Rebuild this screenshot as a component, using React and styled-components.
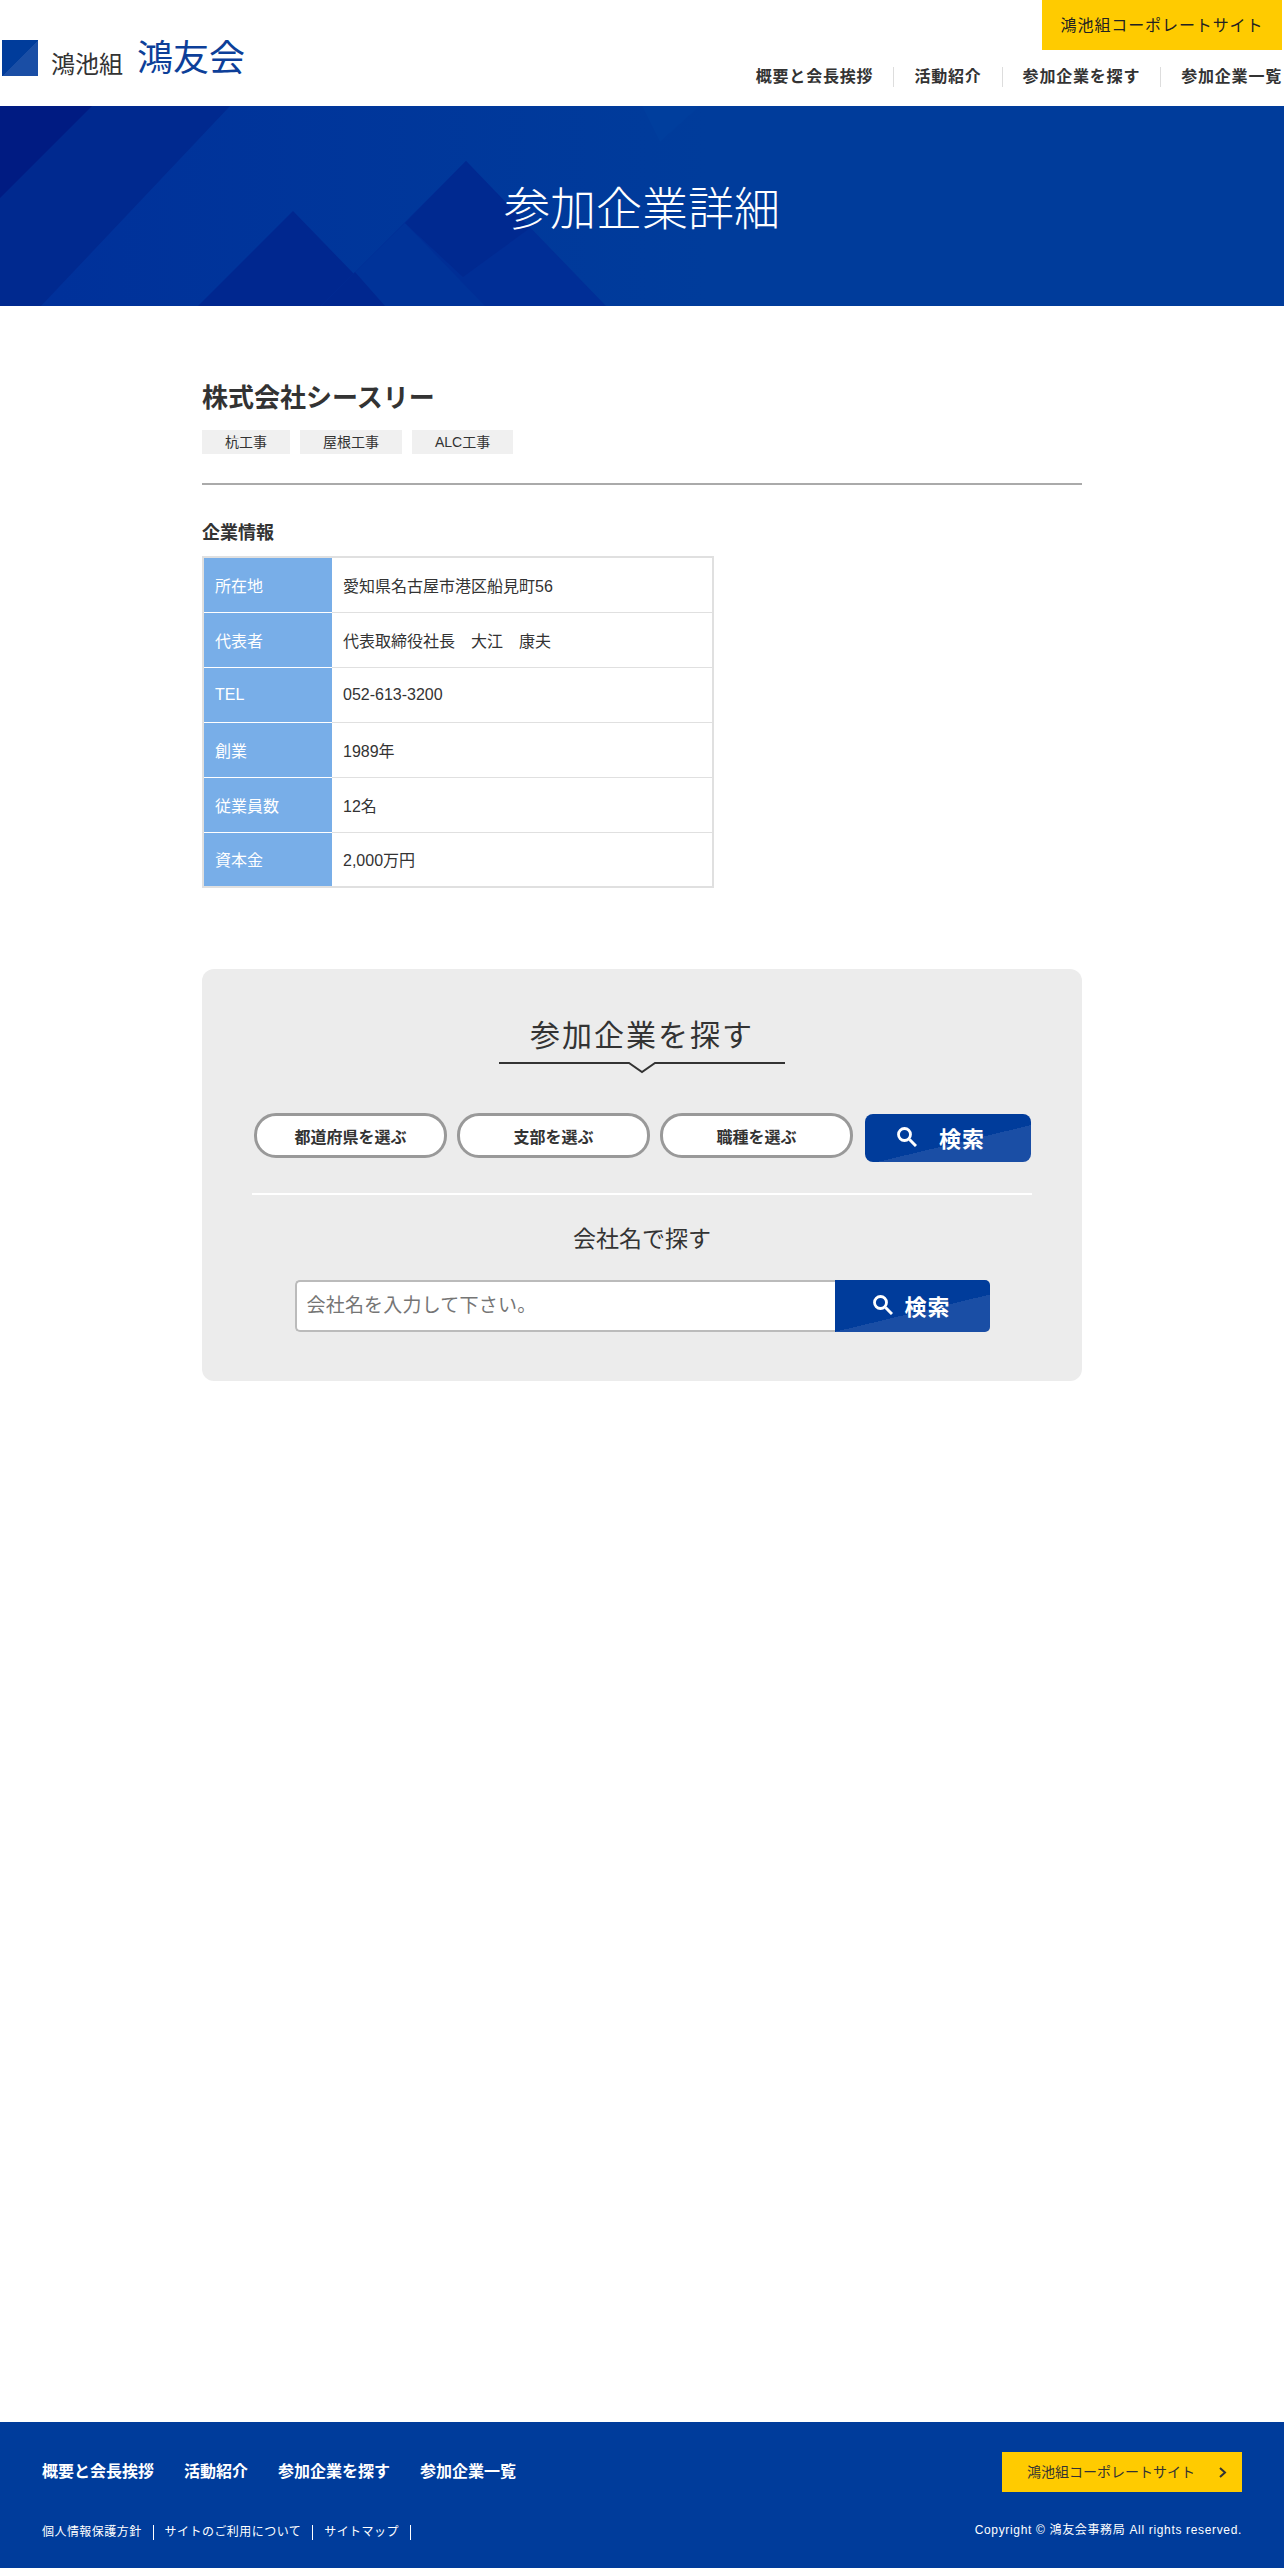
import React from "react";
import styled, { createGlobalStyle } from "styled-components";

const GlobalStyle = createGlobalStyle`
  html, body {
    margin: 0;
    padding: 0;
    background: #fff;
  }
  body {
    color: #333;
    font-family: "Liberation Sans", "Noto Sans CJK JP", sans-serif;
  }
  * {
    box-sizing: border-box;
  }
`;

const Page = styled.div`
  min-height: 2568px;
  display: flex;
  flex-direction: column;
`;

const Header = styled.header`
  height: 106px;
  display: flex;
  justify-content: space-between;
  padding: 0 2px;
`;

const Logo = styled.div`
  display: flex;
  align-items: flex-end;
  height: 78px;
`;

const LogoMark = styled.span`
  width: 36px;
  height: 36px;
  margin: 0 13px 2px 0;
  background: linear-gradient(135deg, #003c9b 50%, #1a4ea5 50%);
`;

const LogoSub = styled.span`
  font-size: 24px;
  line-height: 26px;
  color: #333;
  margin-right: 14px;
`;

const LogoMain = styled.span`
  font-size: 36px;
  line-height: 38px;
  color: #0d3f99;
`;

const HeaderRight = styled.div`
  display: flex;
  flex-direction: column;
  align-items: flex-end;
`;

const CorpLink = styled.a`
  width: 240px;
  height: 50px;
  padding-bottom: 2px;
  display: flex;
  align-items: center;
  justify-content: center;
  background: #ffcb00;
  color: #222;
  font-size: 16px;
  letter-spacing: 0.9px;
`;

const Nav = styled.nav`
  display: flex;
  align-items: center;
  margin-top: 17px;
`;

const NavItem = styled.a`
  font-size: 16px;
  font-weight: 700;
  letter-spacing: 0.8px;
  line-height: 20px;
  color: #333;
  padding: 0 0 0 20px;
  & + & {
    margin-left: 20px;
    border-left: 1px solid #ddd;
  }
`;

const Hero = styled.section`
  position: relative;
  height: 200px;
  padding-top: 6px;
  display: flex;
  align-items: center;
  justify-content: center;
  background: linear-gradient(90deg, #00309a 0%, #003c9b 55%);
  overflow: hidden;
`;

const HeroArt = styled.svg`
  position: absolute;
  inset: 0;
  width: 100%;
  height: 100%;
`;

const HeroTitle = styled.h1`
  position: relative;
  margin: 0;
  color: #fff;
  font-size: 46px;
  font-weight: 300;
  line-height: 60px;
`;

const Main = styled.main`
  width: 880px;
  margin: 0 auto;
  padding-top: 76px;
`;

const CompanyName = styled.h2`
  margin: 0;
  font-size: 26px;
  font-weight: 700;
  line-height: 32px;
`;

const Tags = styled.ul`
  display: flex;
  gap: 10px;
  margin: 16px 0 0;
  padding: 0 0 29px;
  list-style: none;
  border-bottom: 2px solid #aaa;
`;

const Tag = styled.li`
  height: 24px;
  padding: 0 23px;
  background: #f0f0f0;
  font-size: 14px;
  line-height: 24px;
`;

const SectionTitle = styled.h3`
  margin: 36px 0 0;
  font-size: 18px;
  font-weight: 700;
  line-height: 24px;
`;

const InfoTable = styled.table`
  width: 512px;
  margin-top: 11px;
  border-collapse: collapse;
  border: 2px solid #e0e0e0;
  font-size: 16px;
`;

const Th = styled.th`
  width: 129px;
  height: 55px;
  padding: 0 11px;
  background: #78aee8;
  color: #fff;
  font-weight: 400;
  text-align: left;
  border-top: 1px solid #fff;
  tr:first-child & {
    border-top: 0;
  }
`;

const Td = styled.td`
  padding: 0 11px;
  border-top: 1px solid #e0e0e0;
  tr:first-child & {
    border-top: 0;
  }
`;

const SearchPanel = styled.section`
  margin-top: 81px;
  height: 412px;
  padding: 46px 50px 0;
  background: #ececec;
  border-radius: 12px;
  display: flex;
  flex-direction: column;
  align-items: center;
`;

const SearchTitle = styled.h2`
  margin: 0;
  font-size: 30px;
  font-weight: 400;
  letter-spacing: 2px;
  line-height: 42px;
`;

const TitleRule = styled.svg`
  display: block;
  width: 286px;
  height: 12px;
  margin-top: 5px;
`;

const FilterRow = styled.div`
  align-self: stretch;
  display: flex;
  align-items: flex-start;
  gap: 10px;
  margin-top: 39px;
  padding: 0 1px 31px 2px;
  border-bottom: 2px solid #fff;
`;

const Pill = styled.button`
  width: 193px;
  height: 45px;
  padding: 0;
  background: #fff;
  border: 3px solid #999;
  border-radius: 22px;
  color: #333;
  font: 700 16px "Liberation Sans", "Noto Sans CJK JP", sans-serif;
`;

const SearchButton = styled.button`
  display: flex;
  align-items: center;
  justify-content: center;
  flex: none;
  width: ${(p) => p.$width}px;
  height: ${(p) => p.$height}px;
  gap: ${(p) => p.$gap}px;
  padding: 0 ${(p) => p.$inset || 0}px 2px 0;
  margin: ${(p) => p.$margin || "0"};
  border: 0;
  border-radius: ${(p) => p.$radius};
  background: linear-gradient(166.5deg, #003c9b 58%, #1a4ea5 58%);
  color: #fff;
  font: 700 22px "Liberation Sans", "Noto Sans CJK JP", sans-serif;
  letter-spacing: 1px;
`;

const NameTitle = styled.h3`
  margin: 28px 0 0;
  font-size: 23px;
  font-weight: 400;
  line-height: 32px;
`;

const NameForm = styled.form`
  display: flex;
  margin-top: 25px;
`;

const NameInput = styled.input`
  width: 540px;
  height: 52px;
  padding: 0 10px;
  background: #fff;
  border: 2px solid #bbb;
  border-right: 0;
  border-radius: 5px 0 0 5px;
  font: 400 19px "Liberation Sans", "Noto Sans CJK JP", sans-serif;
  letter-spacing: 0.2px;
  outline: none;
  &::placeholder {
    color: #757575;
  }
`;

const Footer = styled.footer`
  margin-top: auto;
  height: 146px;
  padding: 30px 42px 0;
  background: #003c9b;
  color: #fff;
`;

const FooterTop = styled.div`
  display: flex;
  align-items: center;
  justify-content: space-between;
`;

const FooterNav = styled.nav`
  display: flex;
  gap: 30px;
`;

const FooterNavItem = styled.a`
  font-size: 16px;
  font-weight: 700;
  line-height: 20px;
`;

const FooterCorp = styled.a`
  position: relative;
  width: 240px;
  height: 40px;
  padding-left: 25px;
  background: #ffcb00;
  color: #333;
  font-size: 14px;
  line-height: 40px;
`;

const Chevron = styled.svg`
  position: absolute;
  right: 15px;
  top: 15px;
  width: 9px;
  height: 11px;
`;

const FooterBottom = styled.div`
  display: flex;
  align-items: center;
  justify-content: space-between;
  margin-top: 33px;
`;

const SubLinks = styled.div`
  display: flex;
`;

const SubLink = styled.a`
  padding-right: 11px;
  margin-right: 11px;
  border-right: 1px solid #fff;
  font-size: 12px;
  letter-spacing: 0.45px;
  line-height: 15px;
`;

const Copyright = styled.small`
  font-size: 12px;
  letter-spacing: 0.66px;
  line-height: 15px;
  margin-top: -5px;
`;

const SearchIcon = ({ size }) => (
  <svg width={size} height={size} viewBox="0 0 20 20" fill="none" stroke="#fff">
    <circle cx="7.5" cy="7.5" r="6" strokeWidth="2.8" />
    <path d="M12.5 12.5l6.5 6.5" strokeWidth="3" />
  </svg>
);

const companyRows = [
  ["所在地", "愛知県名古屋市港区船見町56"],
  ["代表者", "代表取締役社長　大江　康夫"],
  ["TEL", "052-613-3200"],
  ["創業", "1989年"],
  ["従業員数", "12名"],
  ["資本金", "2,000万円"],
];

const navItems = ["概要と会長挨拶", "活動紹介", "参加企業を探す", "参加企業一覧"];

export default function App() {
  return (
    <Page>
      <GlobalStyle />
      <Header>
        <Logo>
          <LogoMark />
          <LogoSub>鴻池組</LogoSub>
          <LogoMain>鴻友会</LogoMain>
        </Logo>
        <HeaderRight>
          <CorpLink>鴻池組コーポレートサイト</CorpLink>
          <Nav>
            {navItems.map((item) => (
              <NavItem key={item}>{item}</NavItem>
            ))}
          </Nav>
        </HeaderRight>
      </Header>

      <Hero>
        <HeroArt viewBox="0 0 1284 200" preserveAspectRatio="none">
          <polygon points="0,0 230,0 41,200 0,200" fill="#00298f" />
          <polygon points="0,0 92,0 0,92" fill="#001b82" />
          <polygon points="293,105 385,200 198,200" fill="#00278f" />
          <polygon points="466,55 606,200 321,200" fill="#002e96" />
          <polygon points="405,117 485,200 321,200" fill="#003399" />
          <polygon points="355,166 385,200 321,200" fill="#00278f" />
          <polygon points="466,55 530,122 463,171 405,117" fill="#002990" />
          <polygon points="642,0 700,0 660,36" fill="#003e9d" />
        </HeroArt>
        <HeroTitle>参加企業詳細</HeroTitle>
      </Hero>

      <Main>
        <CompanyName>株式会社シースリー</CompanyName>
        <Tags>
          <Tag>杭工事</Tag>
          <Tag>屋根工事</Tag>
          <Tag>ALC工事</Tag>
        </Tags>

        <SectionTitle>企業情報</SectionTitle>
        <InfoTable>
          <tbody>
            {companyRows.map(([label, value]) => (
              <tr key={label}>
                <Th>{label}</Th>
                <Td>{value}</Td>
              </tr>
            ))}
          </tbody>
        </InfoTable>

        <SearchPanel>
          <SearchTitle>参加企業を探す</SearchTitle>
          <TitleRule viewBox="0 0 286 12" fill="none" stroke="#333" strokeWidth="2">
            <path d="M0 1H130l13 9 13-9H286" />
          </TitleRule>
          <FilterRow>
            <Pill>都道府県を選ぶ</Pill>
            <Pill>支部を選ぶ</Pill>
            <Pill>職種を選ぶ</Pill>
            <SearchButton $width={166} $height={48} $gap={22} $inset={14} $margin="1px 0 0 2px" $radius="8px">
              <SearchIcon size={20} />
              検索
            </SearchButton>
          </FilterRow>
          <NameTitle>会社名で探す</NameTitle>
          <NameForm>
            <NameInput placeholder="会社名を入力して下さい。" />
            <SearchButton $width={155} $height={52} $gap={11} $radius="0 5px 5px 0">
              <SearchIcon size={20} />
              検索
            </SearchButton>
          </NameForm>
        </SearchPanel>
      </Main>

      <Footer>
        <FooterTop>
          <FooterNav>
            {navItems.map((item) => (
              <FooterNavItem key={item}>{item}</FooterNavItem>
            ))}
          </FooterNav>
          <FooterCorp>
            鴻池組コーポレートサイト
            <Chevron viewBox="0 0 9 11" fill="none" stroke="#333" strokeWidth="2">
              <path d="M2 1l5 4.5L2 10" />
            </Chevron>
          </FooterCorp>
        </FooterTop>
        <FooterBottom>
          <SubLinks>
            <SubLink>個人情報保護方針</SubLink>
            <SubLink>サイトのご利用について</SubLink>
            <SubLink>サイトマップ</SubLink>
          </SubLinks>
          <Copyright>Copyright © 鴻友会事務局 All rights reserved.</Copyright>
        </FooterBottom>
      </Footer>
    </Page>
  );
}
